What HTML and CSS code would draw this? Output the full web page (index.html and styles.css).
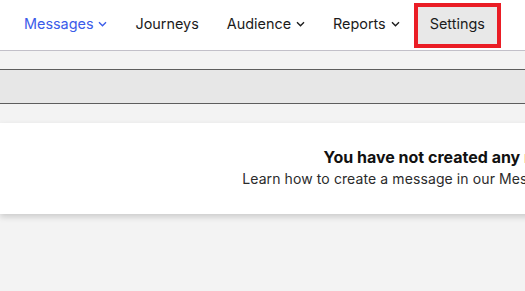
FILE: index.html
```html
<!DOCTYPE html>
<html lang="en">
<head>
    <meta charset="UTF-8">
    <title>Messages</title>
    <link rel="stylesheet" href="styles.css">
</head>
<body>
    <header class="topbar">
        <nav class="menu">
            <a class="menu-item current" href="#">Messages
                <svg class="chev" width="9" height="6" viewBox="0 0 9 6"><path d="M1 1.2l3.5 3.5 3.5-3.5" fill="none" stroke="currentColor" stroke-width="1.4"/></svg>
            </a>
            <a class="menu-item" href="#">Journeys</a>
            <a class="menu-item" href="#">Audience
                <svg class="chev" width="9" height="6" viewBox="0 0 9 6"><path d="M1 1.2l3.5 3.5 3.5-3.5" fill="none" stroke="currentColor" stroke-width="1.4"/></svg>
            </a>
            <a class="menu-item" href="#">Reports
                <svg class="chev" width="9" height="6" viewBox="0 0 9 6"><path d="M1 1.2l3.5 3.5 3.5-3.5" fill="none" stroke="currentColor" stroke-width="1.4"/></svg>
            </a>
            <a class="menu-item highlight" href="#">Settings</a>
        </nav>
    </header>

    <main class="content">
        <div class="toolbar"></div>
        <section class="empty-card">
            <h2 class="empty-title">You have not created any messages yet</h2>
            <p class="empty-text">Learn how to create a message in our Messages documentation page.</p>
        </section>
    </main>
</body>
</html>
```

FILE: styles.css
```css
html, body {
    margin: 0;
    height: 100%;
}

body {
    font-family: Inter, "Noto Sans", sans-serif;
    background-color: #f3f3f3;
    overflow: hidden;
}

.topbar {
    background-color: white;
    height: 50px;
    border-bottom: 1px solid #c2c0c9;
}

.menu {
    display: flex;
    align-items: center;
    gap: 4px;
    height: 100%;
    padding-left: 12px;
}

.menu-item {
    display: flex;
    align-items: center;
    gap: 5px;
    padding: 8px 12px 12px;
    font-size: 14.4px;
    color: #1b1b1b;
    text-decoration: none;
}

.menu-item.current {
    color: #3b5ce9;
}

.chev {
    margin-top: 1px;
}

.menu-item.highlight {
    margin-left: 2px;
    background-color: #e8e8e8;
    outline: 4px solid #ea1d25;
}

.content {
    padding-top: 18px;
}

.toolbar {
    height: 33px;
    background-color: #e7e7e7;
    border-top: 1px solid #5d5d5d;
    border-bottom: 1px solid #5d5d5d;
}

.empty-card {
    margin-top: 19px;
    width: 956px;
    height: 91px;
    padding-top: 24px;
    box-sizing: border-box;
    background-color: white;
    box-shadow: 0 3px 6px rgba(0, 0, 0, 0.16);
    text-align: center;
}

.empty-title {
    margin: 0;
    font-size: 16px;
    font-weight: 700;
    color: #111;
}

.empty-text {
    margin: 3px 0 0;
    font-size: 14px;
    letter-spacing: 0.1px;
    color: #2b2b2b;
}
```
